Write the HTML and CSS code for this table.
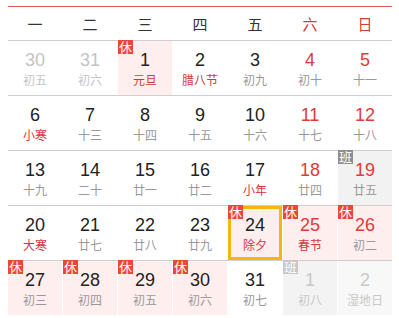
FILE: index.html
```html
<!DOCTYPE html>
<html lang="zh">
<head>
<meta charset="utf-8">
<link rel="stylesheet" href="styles.css">
</head>
<body>
<div class="cal">
  <div class="head">
    <div>一</div><div>二</div><div>三</div><div>四</div><div>五</div><div class="we">六</div><div class="we">日</div>
  </div>
  <div class="week">
    <div class="day other"><div class="n">30</div><div class="l">初五</div></div>
    <div class="day other"><div class="n">31</div><div class="l">初六</div></div>
    <div class="day rest"><span class="badge">休</span><div class="n">1</div><div class="l red">元旦</div></div>
    <div class="day"><div class="n">2</div><div class="l red">腊八节</div></div>
    <div class="day"><div class="n">3</div><div class="l">初九</div></div>
    <div class="day we"><div class="n">4</div><div class="l">初十</div></div>
    <div class="day we"><div class="n">5</div><div class="l">十一</div></div>
  </div>
  <div class="week">
    <div class="day"><div class="n">6</div><div class="l red">小寒</div></div>
    <div class="day"><div class="n">7</div><div class="l">十三</div></div>
    <div class="day"><div class="n">8</div><div class="l">十四</div></div>
    <div class="day"><div class="n">9</div><div class="l">十五</div></div>
    <div class="day"><div class="n">10</div><div class="l">十六</div></div>
    <div class="day we"><div class="n">11</div><div class="l">十七</div></div>
    <div class="day we"><div class="n">12</div><div class="l">十八</div></div>
  </div>
  <div class="week">
    <div class="day"><div class="n">13</div><div class="l">十九</div></div>
    <div class="day"><div class="n">14</div><div class="l">二十</div></div>
    <div class="day"><div class="n">15</div><div class="l">廿一</div></div>
    <div class="day"><div class="n">16</div><div class="l">廿二</div></div>
    <div class="day"><div class="n">17</div><div class="l red">小年</div></div>
    <div class="day we"><div class="n">18</div><div class="l">廿四</div></div>
    <div class="day we work"><span class="badge gray">班</span><div class="n">19</div><div class="l">廿五</div></div>
  </div>
  <div class="week">
    <div class="day"><div class="n">20</div><div class="l red">大寒</div></div>
    <div class="day"><div class="n">21</div><div class="l">廿七</div></div>
    <div class="day"><div class="n">22</div><div class="l">廿八</div></div>
    <div class="day"><div class="n">23</div><div class="l">廿九</div></div>
    <div class="day rest selected"><span class="badge">休</span><div class="n">24</div><div class="l red">除夕</div></div>
    <div class="day rest we"><span class="badge">休</span><div class="n">25</div><div class="l red">春节</div></div>
    <div class="day rest we"><span class="badge">休</span><div class="n">26</div><div class="l">初二</div></div>
  </div>
  <div class="week last">
    <div class="day rest"><span class="badge">休</span><div class="n">27</div><div class="l">初三</div></div>
    <div class="day rest"><span class="badge">休</span><div class="n">28</div><div class="l">初四</div></div>
    <div class="day rest"><span class="badge">休</span><div class="n">29</div><div class="l">初五</div></div>
    <div class="day rest"><span class="badge">休</span><div class="n">30</div><div class="l">初六</div></div>
    <div class="day"><div class="n">31</div><div class="l">初七</div></div>
    <div class="day next work1"><span class="badge light">班</span><div class="n">1</div><div class="l">初八</div></div>
    <div class="day next next2"><div class="n">2</div><div class="l">湿地日</div></div>
  </div>
</div>
</body>
</html>
```
FILE: styles.css
```css
html, body {
  margin: 0;
  padding: 0;
  background: #fff;
}
body {
  font-family: "Liberation Sans", "Noto Sans CJK SC", sans-serif;
}
.cal {
  margin: 6px 0 0 8px;
  width: 384px;
  border-top: 1px solid #e05a5a;
}
.head {
  display: grid;
  grid-template-columns: repeat(7, 54px);
  column-gap: 1px;
  height: 33px;
  line-height: 33px;
  border-bottom: 1px solid #cfcfcf;
  text-align: center;
  font-family: "Noto Sans CJK SC", sans-serif;
  font-size: 15px;
  color: #333;
}
.head .we {
  color: #d63a3a;
}
.week {
  display: grid;
  grid-template-columns: repeat(7, 54px);
  column-gap: 1px;
  height: 54px;
  border-bottom: 1px solid #cfcfcf;
}
.week.last {
  border-bottom: none;
}
.day {
  position: relative;
  text-align: center;
  padding-top: 9px;
  box-sizing: border-box;
}
.n {
  font-family: "Liberation Sans", sans-serif;
  font-size: 18px;
  line-height: 21px;
  color: #222;
}
.l {
  font-family: "Noto Sans CJK SC", sans-serif;
  font-size: 12px;
  line-height: 18px;
  color: #999;
}
.l.red {
  color: #d7353c;
}
.day.we .n {
  color: #e03a3a;
}
.day.other .n,
.day.other .l {
  color: #c4c4c4;
}
.day.rest {
  background: #ffeeee;
}
.day.work {
  background: #f2f2f2;
}
.day.next .n,
.day.next .l {
  color: #c8c8c8;
}
.day.work1 {
  background: #f3f3f3;
}
.day.next2 {
  background: #f8f8f8;
}
.day.selected {
  box-shadow: inset 0 0 0 3px #f5b70c;
}
.badge {
  position: absolute;
  top: -1px;
  left: 0;
  width: 15px;
  height: 14px;
  line-height: 14px;
  font-family: "Noto Sans CJK SC", sans-serif;
  font-size: 13px;
  color: #fff;
  background: #ea4738;
  text-align: center;
  z-index: 2;
}
.badge.gray {
  background: #8e8e8e;
}
.badge.light {
  background: #c6c6c6;
}
```
